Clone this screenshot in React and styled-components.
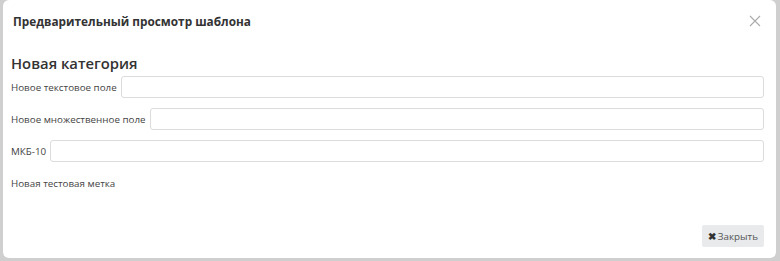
import styled, { createGlobalStyle } from "styled-components";

const GlobalStyle = createGlobalStyle`
  html, body {
    margin: 0;
    padding: 0;
    background: #cfcfcf;
  }
  body {
    font-family: "Open Sans", "Noto Sans", sans-serif;
  }
`;

const Backdrop = styled.div`
  width: 780px;
  height: 261px;
  box-sizing: border-box;
  padding: 0 4px 3px 3px;
  background: #cfcfcf;
  display: flex;
`;

const Modal = styled.div`
  flex: 1;
  background: #fff;
  border-radius: 6px;
  display: flex;
  flex-direction: column;
`;

const Header = styled.div`
  height: 42px;
  display: flex;
  align-items: center;
  justify-content: space-between;
  padding: 0 14px 0 10px;
`;

const Title = styled.div`
  font-size: 11.8px;
  font-weight: 700;
  color: #333;
`;

const CloseIcon = styled.button`
  border: none;
  background: none;
  padding: 0;
  width: 14px;
  height: 14px;
  display: flex;
  cursor: pointer;
`;

const Body = styled.div`
  flex: 1;
  padding: 10px 12px 0 8px;
  display: flex;
  flex-direction: column;
`;

const Heading = styled.div`
  font-size: 14.8px;
  font-weight: 600;
  color: #333;
  line-height: 22px;
  margin-bottom: 2px;
`;

const Row = styled.div`
  display: flex;
  align-items: center;
  gap: 4px;
  margin-bottom: 10px;
`;

const Label = styled.label`
  font-size: 9.8px;
  color: #444;
  white-space: nowrap;
`;

const Input = styled.input`
  flex: 1;
  height: 22px;
  box-sizing: border-box;
  border: 1px solid #dcdcdc;
  border-radius: 3px;
  outline: none;
  font-family: inherit;
`;

const Note = styled.div`
  font-size: 9.8px;
  color: #444;
  margin-top: 5px;
`;

const Footer = styled.div`
  display: flex;
  justify-content: flex-end;
  padding: 0 12px 11px;
`;

const Button = styled.button`
  height: 22px;
  padding: 0 6px 0 6px;
  border: none;
  border-radius: 2px;
  background: #e8eaec;
  color: #555;
  font-family: inherit;
  font-size: 9.8px;
  display: flex;
  align-items: center;
  gap: 2px;
`;

const Cross = styled.span`
  font-size: 10px;
  color: #333;
  font-weight: 700;
`;

const fields = [
  "Новое текстовое поле",
  "Новое множественное поле",
  "МКБ-10",
];

export default function App() {
  return (
    <>
      <GlobalStyle />
      <Backdrop>
        <Modal>
          <Header>
            <Title>Предварительный просмотр шаблона</Title>
            <CloseIcon aria-label="close">
              <svg width="14" height="14" viewBox="0 0 14 14">
                <path d="M2 2 L12 12 M12 2 L2 12" stroke="#aaa" strokeWidth="1.1" />
              </svg>
            </CloseIcon>
          </Header>
          <Body>
            <Heading>Новая категория</Heading>
            {fields.map((f) => (
              <Row key={f}>
                <Label>{f}</Label>
                <Input />
              </Row>
            ))}
            <Note>Новая тестовая метка</Note>
          </Body>
          <Footer>
            <Button>
              <Cross>✖</Cross>Закрыть
            </Button>
          </Footer>
        </Modal>
      </Backdrop>
    </>
  );
}
